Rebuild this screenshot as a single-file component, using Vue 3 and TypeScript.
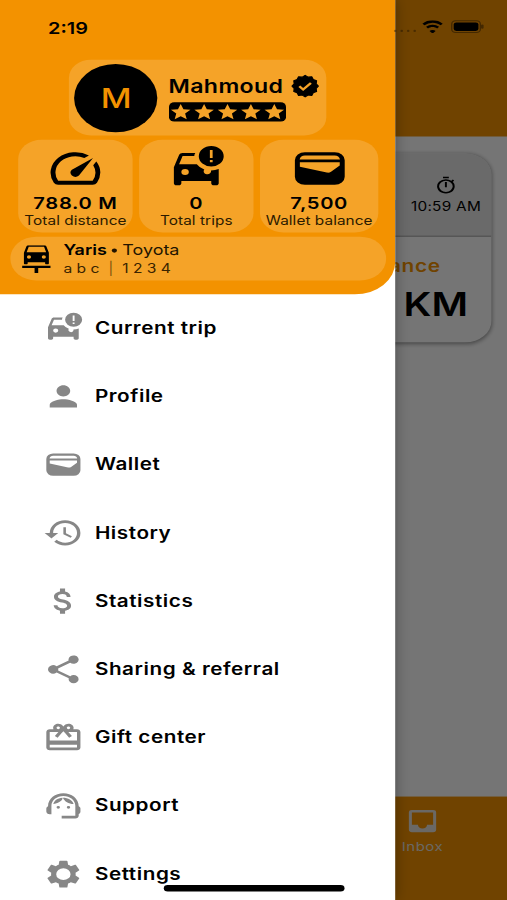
<script setup lang="ts">
interface MenuItem {
  label: string
  icon: string
}

interface Stat {
  value: string
  label: string
  icon: string
}

const icons: Record<string, string> = {
  speed:
    'M20.38 8.57l-1.23 1.85a8 8 0 0 1-.22 7.58H5.07A8 8 0 0 1 15.58 6.85l1.85-1.23A10 10 0 0 0 3.35 19a2 2 0 0 0 1.72 1h13.85a2 2 0 0 0 1.74-1 10 10 0 0 0-.27-10.44zm-9.79 6.84a2 2 0 0 0 2.83 0l5.66-8.49-8.49 5.66a2 2 0 0 0 0 2.83z',
  trip:
    'M18 1a5 5 0 1 0 0 10 5 5 0 0 0 0-10zm.55 8h-1.1V7.9h1.1zm0-2.1h-1.1V3h1.1z M11.6 4.4H6.5c-.66 0-1.21.42-1.42 1.01L3 11.4v7.8c0 .55.45 1 1 1h1c.55 0 1-.45 1-1v-1.1h12v1.1c0 .55.45 1 1 1h1c.55 0 1-.45 1-1v-6.9a7 7 0 0 1-3.1.7 1.5 1.5 0 1 1-2.7-.5 7 7 0 0 1-3-2.6H5.1l1.4-4h4.700c0-.5.1-1 .4-1.500zM7.5 12.2a1.5 1.5 0 1 1 0 3 1.5 1.5 0 0 1 0-3z',
  person:
    'M12 12c2.21 0 4-1.79 4-4s-1.79-4-4-4-4 1.79-4 4 1.79 4 4 4zm0 2c-2.67 0-8 1.34-8 4v2h16v-2c0-2.66-5.33-4-8-4z',
  wallet:
    'M6 4h12a4 4 0 0 1 4 4v8a4 4 0 0 1-4 4H6a4 4 0 0 1-4-4V8a4 4 0 0 1 4-4zm0 1.7c-1.1 0-1.9.7-2.1 1.9h16.2c-.2-1.2-1-1.9-2.1-1.9zM4 9v2.1l10.8 2.9c.6.2 1.2 0 1.7-.4L20 10.6V9z',
  history:
    'M13 3a9 9 0 0 0-9 9H1l3.89 3.89.07.14L9 12H6c0-3.87 3.13-7 7-7s7 3.13 7 7-3.13 7-7 7c-1.93 0-3.68-.79-4.94-2.06l-1.42 1.42A8.95 8.95 0 0 0 13 21a9 9 0 0 0 0-18zm-1 5v5l4.28 2.54.72-1.21-3.5-2.08V8H12z',
  money:
    'M11.8 10.9c-2.27-.59-3-1.2-3-2.15 0-1.09 1.01-1.85 2.7-1.85 1.78 0 2.44.85 2.5 2.1h2.21c-.07-1.72-1.12-3.3-3.21-3.81V3h-3v2.16c-1.94.42-3.5 1.68-3.5 3.61 0 2.31 1.91 3.46 4.7 4.13 2.5.6 3 1.48 3 2.41 0 .69-.49 1.79-2.7 1.79-2.06 0-2.87-.92-2.98-2.1h-2.2c.12 2.19 1.76 3.42 3.68 3.83V21h3v-2.15c1.95-.37 3.5-1.5 3.5-3.55 0-2.84-2.43-3.81-4.7-4.4z',
  share:
    'M18 16.08c-.76 0-1.44.3-1.96.77L8.91 12.7c.05-.23.09-.46.09-.7s-.04-.47-.09-.7l7.05-4.11A2.99 2.99 0 1 0 15 5c0 .24.04.47.09.7L8.04 9.81a3 3 0 1 0 0 4.38l7.12 4.16c-.05.21-.08.43-.08.65a2.92 2.92 0 1 0 2.92-2.92z',
  gift:
    'M20 6h-2.18c.11-.31.18-.65.18-1 0-1.66-1.34-3-3-3-1.05 0-1.96.54-2.5 1.35l-.5.67-.5-.68C10.96 2.54 10.05 2 9 2 7.34 2 6 3.34 6 5c0 .35.07.69.18 1H4c-1.11 0-1.99.89-1.99 2L2 19c0 1.11.89 2 2 2h16c1.11 0 2-.89 2-2V8c0-1.11-.89-2-2-2zm-5-2c.55 0 1 .45 1 1s-.45 1-1 1-1-.45-1-1 .45-1 1-1zM9 4c.55 0 1 .45 1 1s-.45 1-1 1-1-.45-1-1 .45-1 1-1zm11 15H4v-2h16v2zm0-5H4V8h5.08L7 10.83 8.62 12 11 8.76l1-1.36 1 1.36L15.38 12 17 10.83 14.92 8H20v6z',
  support:
    'M21 12.22C21 6.73 16.74 3 12 3c-4.69 0-9 3.65-9 9.28-.6.34-1 .98-1 1.72v2c0 1.1.9 2 2 2h1v-6.1c0-3.87 3.13-7 7-7s7 3.13 7 7V19h-8v2h8c1.1 0 2-.9 2-2v-1.22c.59-.31 1-.92 1-1.64v-2.3c0-.7-.41-1.31-1-1.62z M9 12a1 1 0 1 1 0 2 1 1 0 0 1 0-2z M15 12a1 1 0 1 1 0 2 1 1 0 0 1 0-2z M11.500 6.100c.2.800-.5 2.200-1.900 3.200-1 .7-2.200 1.200-3.500 1.400.3-2.200 2.400-4.500 5.400-4.600z M11.700 6.100c3.100 0 5.700 1.900 6.300 4.600-2.900-.2-5.300-1.800-6.300-4.600z',
  settings:
    'M19.14 12.94c.04-.3.06-.61.06-.94 0-.32-.02-.64-.07-.94l2.03-1.58c.18-.14.23-.41.12-.61l-1.92-3.32c-.12-.22-.37-.29-.59-.22l-2.39.96c-.5-.38-1.03-.7-1.62-.94l-.36-2.54c-.04-.24-.24-.41-.48-.41h-3.84c-.24 0-.43.17-.47.41l-.36 2.54c-.59.24-1.13.57-1.62.94l-2.39-.96c-.22-.08-.47 0-.59.22L2.74 8.87c-.12.21-.08.47.12.61l2.03 1.58c-.05.3-.09.63-.09.94s.02.64.07.94l-2.03 1.58c-.18.14-.23.41-.12.61l1.92 3.32c.12.22.37.29.59.22l2.39-.96c.5.38 1.03.7 1.62.94l.36 2.54c.05.24.24.41.48.41h3.84c.24 0 .44-.17.47-.41l.36-2.54c.59-.24 1.13-.56 1.62-.94l2.39.96c.22.08.47 0 .59-.22l1.92-3.32c.12-.22.07-.47-.12-.61l-2.01-1.58zM12 16.2a4.2 4.2 0 1 1 0-8.4 4.2 4.2 0 0 1 0 8.4z',
  star:
    'M12 17.27L18.18 21l-1.64-7.03L22 9.24l-7.19-.61L12 2 9.19 8.63 2 9.24l5.46 4.73L5.82 21z',
}

const stats: Stat[] = [
  { value: '788.0 M', label: 'Total distance', icon: 'speed' },
  { value: '0', label: 'Total trips', icon: 'trip' },
  { value: '7,500', label: 'Wallet balance', icon: 'wallet' },
]

const menu: MenuItem[] = [
  { label: 'Current trip', icon: 'trip' },
  { label: 'Profile', icon: 'person' },
  { label: 'Wallet', icon: 'wallet' },
  { label: 'History', icon: 'history' },
  { label: 'Statistics', icon: 'money' },
  { label: 'Sharing & referral', icon: 'share' },
  { label: 'Gift center', icon: 'gift' },
  { label: 'Support', icon: 'support' },
  { label: 'Settings', icon: 'settings' },
]

// Twelve-pointed outline of the verification badge.
const badgePoints = Array.from({ length: 24 }, (_, i) => {
  const r = i % 2 === 0 ? 10.3 : 8.9
  const a = (i * Math.PI) / 12
  return `${(12 + r * Math.cos(a)).toFixed(2)},${(12 + r * Math.sin(a)).toFixed(2)}`
}).join(' ')
</script>

<template>
  <div class="viewport">
    <div class="screen">
      <div class="page">
        <header class="appbar"></header>
        <main class="content">
          <section class="trip-card">
            <div class="trip-top">
              <div class="start-time">AM</div>
              <div class="time">
                <svg class="timer" viewBox="0 0 24 24">
                  <path d="M9 1h6v2H9zM11 7.500h2v6.500h-2zM19.030 7.390l1.420-1.420c-.43-.51-.9-.99-1.410-1.410l-1.420 1.420A8.960 8.960 0 0 0 12 4a9 9 0 1 0 7.030 3.390zM12 20a7 7 0 1 1 0-14 7 7 0 0 1 0 14z" />
                </svg>
                <span>10:59 AM</span>
              </div>
            </div>
            <div class="trip-bottom">
              <span class="caption">Distance</span>
              <span class="unit">KM</span>
            </div>
          </section>
        </main>
        <nav class="bottom-nav">
          <div class="tab">
            <svg class="inbox" viewBox="0 0 24 24">
              <path d="M19 3H5a2 2 0 0 0-2 2v14c0 1.100.9 2 2 2h14a2 2 0 0 0 2-2V5a2 2 0 0 0-2-2zm0 12h-4a3 3 0 0 1-6 0H5V5h14z" />
            </svg>
            <span>Inbox</span>
          </div>
        </nav>
      </div>

      <div class="scrim"></div>

      <aside class="drawer">
        <div class="header">
          <div class="profile">
            <div class="avatar">M</div>
            <div class="identity">
              <div class="name-row">
                <span class="name">Mahmoud</span>
                <svg class="badge" viewBox="0 0 24 24">
                  <polygon :points="badgePoints" class="badge-shape" />
                  <path d="M7.400 12.200l3 3 6.100-6.200" class="badge-check" />
                </svg>
              </div>
              <div class="stars">
                <svg v-for="n in 5" :key="n" viewBox="0 0 24 24"><path :d="icons.star" /></svg>
              </div>
            </div>
          </div>

          <div class="stats">
            <div v-for="s in stats" :key="s.label" class="stat">
              <svg viewBox="0 0 24 24"><path :d="icons[s.icon]" fill-rule="evenodd" /></svg>
              <strong>{{ s.value }}</strong>
              <span>{{ s.label }}</span>
            </div>
          </div>

          <div class="vehicle">
            <svg class="plate" viewBox="0 0 22 26">
              <path
                fill-rule="evenodd"
                d="M5 0h12c.8 0 1.400.4 1.700 1.200L20.600 7v9.800c0 .5-.3.9-.8.9h-1.300c-.5 0-.8-.4-.8-.9V16H4.300v.8c0 .5-.3.9-.8.9H2.200c-.5 0-.8-.4-.8-.9V7l1.900-5.800C3.600.4 4.200 0 5 0zm.1 1.500L3.500 6.600h15l-1.600-5.100zM5.300 9.400a1.600 1.600 0 1 0 0 3.200 1.600 1.600 0 0 0 0-3.200zm11.400 0a1.600 1.600 0 1 0 0 3.200 1.600 1.600 0 0 0 0-3.200zM0 19.300h22v2h-9.600V26H9.600v-4.700H0z"
              />
            </svg>
            <div class="vehicle-text">
              <div class="model"><b>Yaris</b> <i></i> Toyota</div>
              <div class="reg">a b c &nbsp;<em>|</em>&nbsp; 1 2 3 4</div>
            </div>
          </div>
        </div>

        <ul class="menu">
          <li v-for="m in menu" :key="m.label">
            <svg viewBox="0 0 24 24"><path :d="icons[m.icon]" fill-rule="evenodd" /></svg>
            <span>{{ m.label }}</span>
          </li>
        </ul>
      </aside>

      <div class="status">
        <span class="clock">2:19</span>
        <div class="indicators">
          <div class="signal"><i></i><i></i><i></i><i></i></div>
          <svg class="wifi" viewBox="0 0 17 12" preserveAspectRatio="none">
            <path d="M8.500 2.200c2.300 0 4.400.9 6 2.400l1.600-1.500a11 11 0 0 0-15.200 0l1.600 1.500a8.700 8.700 0 0 1 6-2.400z" />
            <path d="M8.500 6.100c1.300 0 2.500.5 3.400 1.300l1.500-1.500a7.200 7.200 0 0 0-9.800 0l1.500 1.500c.9-.8 2.100-1.300 3.400-1.300z" />
            <path d="M8.500 8.800c-.9 0-1.700.3-2.300.9l2.300 2.300 2.300-2.300c-.6-.6-1.400-.9-2.300-.9z" />
          </svg>
          <div class="battery"><i></i></div>
        </div>
      </div>
      <div class="home-indicator"></div>
    </div>
  </div>
</template>

<style>
html,
body {
  margin: 0;
  overflow: hidden;
}
</style>

<style scoped>
.viewport {
  width: 507px;
  height: 900px;
  overflow: hidden;
  background: #757575;
}
/* 390 x 844 phone canvas stretched over the viewport */
.screen {
  position: relative;
  width: 390px;
  height: 844px;
  overflow: hidden;
  transform: scale(1.3, 1.06635);
  transform-origin: 0 0;
  font-family: Inter, 'Liberation Sans', sans-serif;
  color: #000;
}
.page {
  display: flex;
  flex-direction: column;
  height: 100%;
  background: #fff;
}
.appbar {
  flex: 0 0 128px;
  background: #f39200;
}
.content {
  flex: 1;
  padding: 16px 12px 0;
}
.trip-card {
  height: 177px;
  display: flex;
  flex-direction: column;
  border-radius: 20px;
  overflow: hidden;
  box-shadow: 0 1px 4px rgba(0, 0, 0, 0.4);
  background: #fff;
}
.trip-top {
  height: 77px;
  display: flex;
  justify-content: flex-end;
  gap: 11px;
  padding-right: 8px;
  background: #e6e6e6;
  border-bottom: 1px solid #aaa;
  font-size: 11.800px;
  letter-spacing: 0.2px;
}
.start-time {
  padding-top: 42px;
}
.time {
  display: flex;
  flex-direction: column;
  align-items: center;
  padding-top: 21px;
  line-height: 15px;
}
.timer {
  width: 18px;
  height: 18px;
  margin-bottom: 4px;
}
.trip-bottom {
  display: flex;
  flex-direction: column;
  align-items: flex-end;
  padding-right: 18px;
}
.caption {
  margin: 16.500px 21px 0 0;
  font-size: 16px;
  line-height: 20px;
  font-weight: 600;
  letter-spacing: 0.5px;
  color: #f39200;
}
.unit {
  margin-top: 6.500px;
  font-size: 30.500px;
  line-height: 40px;
  font-weight: 600;
}
.bottom-nav {
  flex: 0 0 97px;
  background: #f39200;
  display: flex;
  justify-content: flex-end;
}
.tab {
  width: 130px;
  display: flex;
  flex-direction: column;
  align-items: center;
  padding-top: 9px;
  color: #e8e2dc;
  font-size: 11.500px;
  letter-spacing: 0.4px;
  font-weight: 400;
}
.inbox {
  width: 28px;
  height: 28px;
  margin-bottom: 2.500px;
  fill: #e8e2dc;
}
.scrim {
  position: absolute;
  inset: 0;
  background: rgba(0, 0, 0, 0.54);
}
.drawer {
  position: absolute;
  left: 0;
  top: 0;
  width: 304px;
  height: 844px;
  overflow: hidden;
  background: #fff;
  box-shadow: 0 0 12px rgba(0, 0, 0, 0.4);
}
.header {
  box-sizing: border-box;
  height: 275.500px;
  padding: 56.300px 0 0;
  background: #f39200;
  border-bottom-right-radius: 31px 30px;
}
.profile {
  box-sizing: border-box;
  width: 198px;
  height: 71px;
  margin-left: 53.300px;
  padding: 3.500px 4px;
  display: flex;
  border-radius: 17px;
  background: #f5a328;
}
.avatar {
  width: 64px;
  height: 64px;
  border-radius: 50%;
  background: #000;
  color: #f39200;
  display: flex;
  align-items: center;
  justify-content: center;
  font-size: 26px;
  font-weight: 500;
}
.identity {
  padding: 8.500px 0 0 8.300px;
}
.name-row {
  display: flex;
  align-items: center;
  height: 24px;
  gap: 4.500px;
}
.name {
  font-size: 17.800px;
  font-weight: 600;
  letter-spacing: 0.3px;
}
.badge {
  width: 23.500px;
  height: 23.500px;
}
.badge-shape {
  stroke: #000;
  stroke-width: 1;
  stroke-linejoin: round;
}
.badge-check {
  fill: none;
  stroke: #f5a328;
  stroke-width: 2;
}
.stars {
  display: flex;
  width: 90px;
  height: 18px;
  margin-top: 3.500px;
  border-radius: 4px;
  background: #000;
}
.stars svg {
  width: 18px;
  height: 18px;
  fill: #f5a328;
}
.stats {
  display: grid;
  grid-template-columns: 88px 88px 91px;
  gap: 5px;
  margin: 3.500px 0 0 14px;
}
.stat {
  box-sizing: border-box;
  height: 87px;
  border-radius: 18px;
  background: #f5a328;
  display: flex;
  flex-direction: column;
  align-items: center;
  padding-top: 4.500px;
  white-space: nowrap;
}
.stat svg {
  width: 46px;
  height: 46px;
}
.stat strong {
  font-size: 15.500px;
  line-height: 19.500px;
  font-weight: 600;
  letter-spacing: 0.5px;
}
.stat span {
  font-size: 11.800px;
  line-height: 13px;
  letter-spacing: 0.05px;
  color: #2b1a00;
}
.vehicle {
  box-sizing: border-box;
  width: 288.500px;
  height: 41.500px;
  margin: 4px 0 0 8.300px;
  padding: 0 9px;
  display: flex;
  align-items: center;
  border-radius: 20px;
  background: #f5a328;
}
.plate {
  width: 22px;
  height: 26px;
}
.vehicle-text {
  margin-left: 9.500px;
  padding-top: 1px;
}
.model {
  display: flex;
  align-items: center;
  gap: 4px;
  font-size: 13.800px;
  line-height: 17.500px;
  color: #221400;
}
.model b {
  font-weight: 600;
  color: #000;
}
.model i {
  width: 4px;
  height: 4px;
  border-radius: 50%;
  background: #221400;
}
.reg {
  font-size: 12px;
  line-height: 17px;
  color: #3a2400;
}
.reg em {
  font-style: normal;
  opacity: 0.6;
}
.menu {
  list-style: none;
  margin: 0;
  padding: 0;
}
.menu li {
  display: flex;
  align-items: center;
  height: 64px;
  padding-left: 33px;
  gap: 8.500px;
  font-size: 15.900px;
  font-weight: 600;
  letter-spacing: 0.430px;
}
.menu svg {
  width: 31.500px;
  height: 31.500px;
  fill: #878787;
}
.status {
  position: absolute;
  left: 0;
  top: 0;
  width: 390px;
  height: 50px;
}
.clock {
  position: absolute;
  left: 37px;
  top: 16.500px;
  font-size: 15.300px;
  line-height: 19px;
  font-weight: 600;
}
.indicators {
  position: absolute;
  left: 303px;
  top: 18.500px;
  display: flex;
  align-items: center;
}
.signal {
  display: flex;
  gap: 3px;
  width: 20px;
  margin-top: 9px;
}
.signal i {
  width: 2px;
  height: 2px;
  border-radius: 1px;
  background: rgba(0, 0, 0, 0.35);
}
.wifi {
  width: 17.500px;
  height: 12.500px;
  margin-left: 1px;
}
.battery {
  position: relative;
  box-sizing: border-box;
  width: 22.500px;
  height: 11.500px;
  margin-left: 5.500px;
  padding: 1px;
  border: 1px solid rgba(0, 0, 0, 0.4);
  border-radius: 3.500px;
}
.battery i {
  display: block;
  height: 100%;
  border-radius: 2px;
  background: #000;
}
.battery::after {
  content: '';
  position: absolute;
  right: -3px;
  top: 3px;
  width: 1.500px;
  height: 3.500px;
  border-radius: 1px;
  background: rgba(0, 0, 0, 0.4);
}
.home-indicator {
  position: absolute;
  left: 126px;
  top: 830px;
  width: 138.500px;
  height: 5.500px;
  border-radius: 3px;
  background: #000;
}
</style>
